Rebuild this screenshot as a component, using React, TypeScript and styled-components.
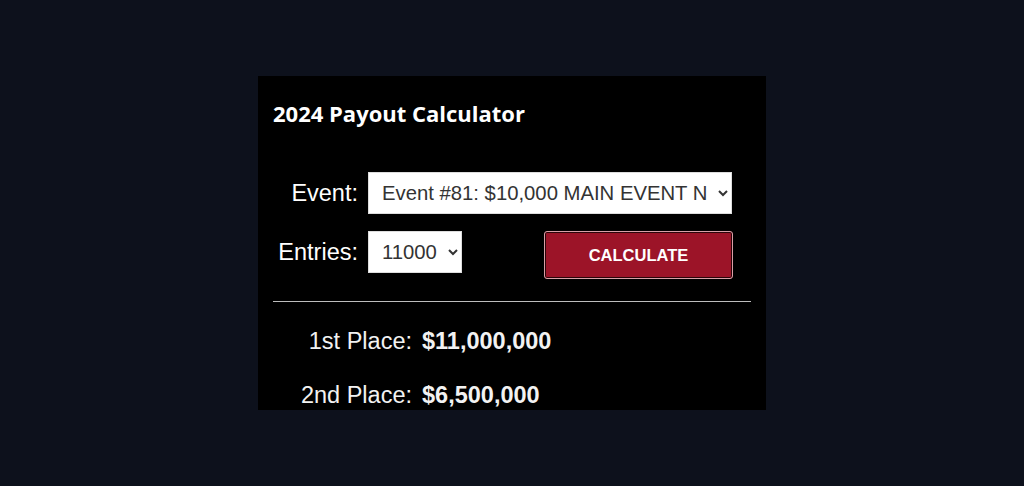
import styled, { createGlobalStyle } from 'styled-components';

const GlobalStyle = createGlobalStyle`
  html, body {
    margin: 0;
    padding: 0;
    background: #0d111c;
  }
`;

const Page = styled.div`
  display: flex;
  align-items: center;
  justify-content: center;
  height: 486px;
  width: 100%;
`;

const Panel = styled.div`
  box-sizing: border-box;
  width: 508px;
  height: 334px;
  overflow: hidden;
  background: #000;
  padding: 23px 15px 0 15px;
  color: #fff;
  font-family: 'Liberation Sans', Arial, sans-serif;
`;

const Title = styled.h2`
  margin: 0;
  font-family: 'Open Sans', sans-serif;
  font-weight: 700;
  font-size: 22px;
  line-height: 29px;
  color: #fff;
`;

const Form = styled.div`
  display: grid;
  grid-template-columns: 85px 365px;
  column-gap: 10px;
  row-gap: 17px;
  margin-top: 44px;
  width: 460px;
`;

const Label = styled.label`
  font-size: 23.5px;
  line-height: 42px;
  text-align: right;
  white-space: nowrap;
  color: #fff;
`;

const Control = styled.div`
  display: flex;
  align-items: flex-start;
  justify-content: space-between;
`;

const Select = styled.select<{ $width: number }>`
  box-sizing: border-box;
  width: ${(p) => p.$width}px;
  height: 42px;
  padding: 0 2px 0 9px;
  border: 1px solid #ddd;
  border-radius: 0;
  background-color: #fff;
  color: #333;
  font-family: 'Liberation Sans', Arial, sans-serif;
  font-size: 20.3px;
  outline: none;
`;

const Button = styled.button`
  box-sizing: border-box;
  width: 189px;
  height: 48px;
  background: #9c1428;
  border: 1px solid #d8a0a8;
  box-shadow: inset 0 0 0 1px #2a0509;
  border-radius: 3px;
  color: #fff;
  font-family: 'Liberation Sans', Arial, sans-serif;
  font-weight: 700;
  font-size: 16.5px;
  cursor: pointer;
`;

const Divider = styled.hr`
  margin: 22px 0 0 0;
  border: none;
  height: 1px;
  background: #bdbdbd;
`;

const Results = styled.div`
  display: grid;
  grid-template-columns: 139px auto;
  column-gap: 10px;
  row-gap: 27px;
  margin-top: 26px;
  font-size: 23.5px;
  line-height: 27px;
`;

const PlaceLabel = styled.span`
  text-align: right;
  color: #f2f2f2;
  white-space: nowrap;
`;

const Amount = styled.span`
  font-weight: 700;
  color: #f2f2f2;
  white-space: nowrap;
`;

const payouts = [
  { place: '1st Place:', amount: '$11,000,000' },
  { place: '2nd Place:', amount: '$6,500,000' },
  { place: '3rd Place:', amount: '$4,000,000' },
];

export default function App() {
  return (
    <>
      <GlobalStyle />
      <Page>
        <Panel>
          <Title>2024 Payout Calculator</Title>
          <Form>
            <Label htmlFor="event">Event:</Label>
            <Control>
              <Select id="event" $width={364} defaultValue="81">
                <option value="81">Event #81: $10,000 MAIN EVENT N</option>
              </Select>
            </Control>
            <Label htmlFor="entries">Entries:</Label>
            <Control>
              <Select id="entries" $width={94} defaultValue="11000">
                <option value="11000">11000</option>
              </Select>
              <Button>CALCULATE</Button>
            </Control>
          </Form>
          <Divider />
          <Results>
            {payouts.map((p) => (
              <>
                <PlaceLabel key={p.place}>{p.place}</PlaceLabel>
                <Amount key={p.amount}>{p.amount}</Amount>
              </>
            ))}
          </Results>
        </Panel>
      </Page>
    </>
  );
}
